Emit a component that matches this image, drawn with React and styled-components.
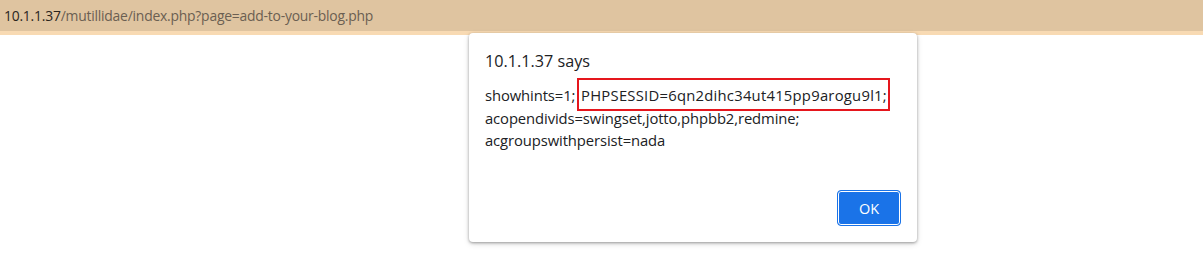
import React from 'react'
import styled, { createGlobalStyle } from 'styled-components'

const Global = createGlobalStyle`
  body {
    margin: 0;
    background: #fff;
    font-family: 'Open Sans', 'Noto Sans', sans-serif;
  }
`

const Page = styled.div`
  position: relative;
  width: 1203px;
  height: 266px;
  overflow: hidden;
`

const AddressBar = styled.div`
  height: 31px;
  background: #dfc4a0;
  border-bottom: 4px solid #f8dab3;
  display: flex;
  align-items: center;
  padding-left: 4px;
  font-size: 13.9px;
  color: #6b5f52;
  letter-spacing: -0.22px;
`

const Host = styled.span`
  color: #2a241d;
`

const Dialog = styled.div`
  position: absolute;
  left: 469px;
  top: 33px;
  width: 448px;
  height: 209px;
  box-sizing: border-box;
  background: #fff;
  border-radius: 4px;
  box-shadow: 0 1px 3px rgba(0, 0, 0, 0.35), 0 2px 6px rgba(0, 0, 0, 0.12);
  padding: 17px 16px 16px;
  display: flex;
  flex-direction: column;
  color: #202124;
`

const Title = styled.div`
  font-size: 16.2px;
  line-height: 22px;
  margin-bottom: 12px;
`

const Message = styled.div`
  font-size: 14.8px;
  line-height: 22.5px;
  letter-spacing: -0.1px;
  flex: 1;
`

const Highlight = styled.span`
  outline: 2px solid #e5161d;
  padding: 5px 1px 4px 2px;
  letter-spacing: 0.25px;
`

const Actions = styled.div`
  display: flex;
  justify-content: flex-end;
`

const OkButton = styled.button`
  width: 64px;
  height: 36px;
  border-radius: 4px;
  border: 1px solid #1a73e8;
  background: #1a73e8;
  color: #fff;
  font-family: inherit;
  font-size: 14.5px;
  box-shadow: inset 0 0 0 1px #fff;
`

export default function App() {
  return (
    <Page>
      <Global />
      <AddressBar>
        <Host>10.1.1.37</Host>/mutillidae/index.php?page=add-to-your-blog.php
      </AddressBar>
      <Dialog>
        <Title>10.1.1.37 says</Title>
        <Message>
          showhints=1;{' '}
          <Highlight>PHPSESSID=6qn2dihc34ut415pp9arogu9l1;</Highlight>
          <br />
          acopendivids=swingset,jotto,phpbb2,redmine;
          <br />
          acgroupswithpersist=nada
        </Message>
        <Actions>
          <OkButton>OK</OkButton>
        </Actions>
      </Dialog>
    </Page>
  )
}
